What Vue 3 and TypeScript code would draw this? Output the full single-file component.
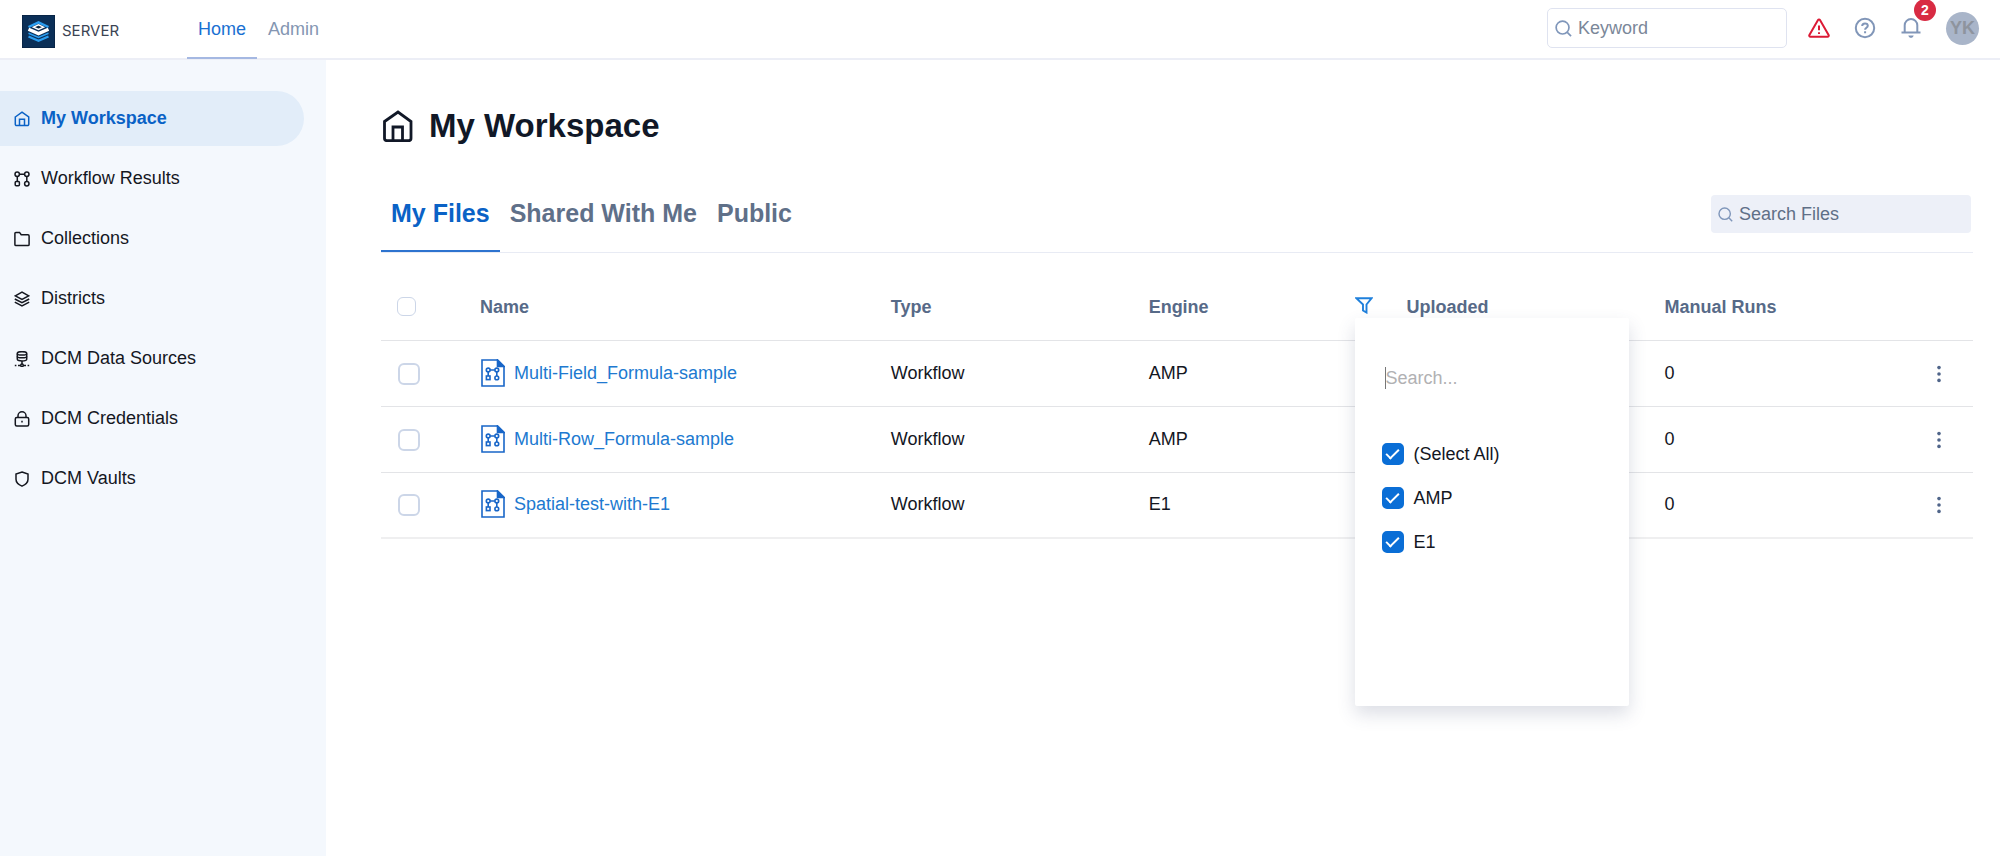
<script setup lang="ts">
import { ref } from 'vue'

interface NavItem {
  label: string
  icon: string
}

interface FileRow {
  name: string
  type: string
  engine: string
  uploaded: string
  runs: number
}

interface FilterOption {
  label: string
  checked: boolean
}

const topTabs = ['Home', 'Admin']
const fileTabs = ['My Files', 'Shared With Me', 'Public']

const navItems: NavItem[] = [
  { label: 'My Workspace', icon: 'home' },
  { label: 'Workflow Results', icon: 'flow' },
  { label: 'Collections', icon: 'folder' },
  { label: 'Districts', icon: 'layers' },
  { label: 'DCM Data Sources', icon: 'database' },
  { label: 'DCM Credentials', icon: 'lock' },
  { label: 'DCM Vaults', icon: 'shield' },
]

const activeTop = ref('Home')
const activeNav = ref('My Workspace')
const activeFileTab = ref('My Files')
const keyword = ref('')
const fileQuery = ref('')
const optionQuery = ref('')
const filterOpen = ref(true)
const allRows = ref(false)
const selected = ref<string[]>([])

const rows: FileRow[] = [
  { name: 'Multi-Field_Formula-sample', type: 'Workflow', engine: 'AMP', uploaded: '', runs: 0 },
  { name: 'Multi-Row_Formula-sample', type: 'Workflow', engine: 'AMP', uploaded: '', runs: 0 },
  { name: 'Spatial-test-with-E1', type: 'Workflow', engine: 'E1', uploaded: '', runs: 0 },
]

const options = ref<FilterOption[]>([
  { label: '(Select All)', checked: true },
  { label: 'AMP', checked: true },
  { label: 'E1', checked: true },
])
</script>

<template>
  <div class="app">
    <header class="topbar">
      <a class="brand" href="#">
        <svg class="brand-logo" viewBox="0 0 33 33" aria-hidden="true">
          <rect width="33" height="33" fill="#0b2f57" stroke="#071c38" />
          <g fill="none" stroke-linejoin="miter">
            <path d="M6.500 12 16.500 7.300 26.500 12" stroke="#2a9df0" stroke-width="2.400" />
            <path d="M11.500 12.200 16.500 9.800 21.500 12.200 16.500 14.500z" fill="#0a2540" stroke="#fff" stroke-width="1.400" />
            <path d="M6.500 14.300 16.500 18.600 26.500 14.300" stroke="#fff" stroke-width="3.400" />
            <path d="M6.500 18.300 16.500 22.500 26.500 18.300" stroke="#2a9df0" stroke-width="1.600" />
            <path d="M6.500 21.500 16.500 25.800 26.500 21.500" stroke="#2a9df0" stroke-width="2.200" />
          </g>
        </svg>
        <span class="brand-name">SERVER</span>
      </a>
      <nav class="top-tabs" aria-label="Main">
        <a
          v-for="tab in topTabs"
          :key="tab"
          href="#"
          class="top-tab"
          :class="{ active: tab === activeTop }"
          @click.prevent="activeTop = tab"
        >{{ tab }}</a>
      </nav>
      <div class="top-actions">
        <label class="keyword">
          <svg class="keyword-icon" viewBox="0 0 18 18" aria-hidden="true">
            <circle cx="8" cy="8" r="6.800" /><path d="M13 13l4 4" />
          </svg>
          <input v-model="keyword" type="text" placeholder="Keyword" aria-label="Keyword" />
        </label>
        <button class="icon-btn alert" type="button" aria-label="Alerts">
          <svg viewBox="0 0 22 22" aria-hidden="true">
            <path d="M10 3.100a1.200 1.200 0 0 1 2 0l8.600 14.900a1.200 1.200 0 0 1-1.100 1.800h-17a1.200 1.200 0 0 1-1.100-1.800z" />
            <path d="M11 8.500v4.800M11 15.200v1.800" />
          </svg>
        </button>
        <button class="icon-btn" type="button" aria-label="Help">
          <svg viewBox="0 0 22 22" aria-hidden="true">
            <circle cx="11" cy="11" r="9.200" />
            <path d="M8.200 9c0-1.700 1.200-2.600 2.800-2.600s2.800 1 2.800 2.400c0 1.900-2.700 2-2.700 3.900M11.100 14.200v2" />
          </svg>
        </button>
        <button class="icon-btn bell" type="button" aria-label="Notifications">
          <svg viewBox="0 0 22 22" aria-hidden="true">
            <path d="M1.500 15.500h19M4.700 15.500V8.300a6.300 6.300 0 0 1 12.600 0v7.200" />
            <path d="M8.300 18.500h5.400c-.5 1.600-1.400 2.300-2.700 2.300s-2.200-.7-2.700-2.300z" class="clapper" />
          </svg>
          <span class="badge">2</span>
        </button>
        <button class="avatar" type="button">YK</button>
      </div>
    </header>

    <div class="body">
      <aside class="sidebar">
        <nav class="side-nav" aria-label="Sections">
          <a
            v-for="item in navItems"
            :key="item.label"
            href="#"
            class="side-item"
            :class="{ active: item.label === activeNav }"
            @click.prevent="activeNav = item.label"
          >
            <svg class="side-icon" viewBox="0 0 16 16" aria-hidden="true">
              <g v-if="item.icon === 'home'">
                <path d="M1.300 6 8 1.200 14.700 6v7.300a1.300 1.300 0 0 1-1.300 1.300H2.600a1.300 1.300 0 0 1-1.300-1.300z" />
                <path d="M5.500 14.500V8.200h5v6.300" />
              </g>
              <g v-else-if="item.icon === 'flow'">
                <circle cx="3.200" cy="3.200" r="2.200" /><circle cx="12.800" cy="3.200" r="2.200" />
                <rect x="1.200" y="10.600" width="4.200" height="4.200" rx="1" /><circle cx="12.800" cy="12.700" r="2.200" />
                <path d="M5.400 3.200h5.200M3.300 5.400v5.200M12.800 5.400v5.200" />
              </g>
              <g v-else-if="item.icon === 'folder'">
                <path d="M.900 13.500V2.400a1 1 0 0 1 1-1h3.600L7.200 3.800h6.800a1.100 1.100 0 0 1 1.100 1.100v8.600a1.100 1.100 0 0 1-1.100 1.100H2a1.100 1.100 0 0 1-1.100-1.100z" />
              </g>
              <g v-else-if="item.icon === 'layers'">
                <path d="M1.300 4.800 8 1.200l6.700 3.600L8 8.400zM.800 8 8 11.700 15.200 8M.8 11.200 8 14.900l7.200-3.700" />
              </g>
              <g v-else-if="item.icon === 'database'">
                <path d="M3.300 2.500C3.300 0 12.700 0 12.700 2.500v5.700c0 2.300-9.400 2.300-9.400 0z" />
                <path d="M3.300 2.700c0 1.700 9.400 1.700 9.400 0M3.300 5.500c0 1.700 9.400 1.700 9.400 0M8 10v3M.8 14.500h1.600M4 14.500h2.500M9.500 14.500H12M13.600 14.500h1.600" />
                <circle cx="8" cy="14.300" r="1.300" />
              </g>
              <g v-else-if="item.icon === 'lock'">
                <rect x="1.300" y="6.500" width="13.400" height="8.400" rx="1.500" />
                <path d="M4 6.500V4.800a4 4 0 0 1 8 0v1.700M8 9.800v1.600" />
              </g>
              <g v-else>
                <path d="M8 1 14 3v5.200c0 3.400-2.400 5.400-6 6.900-3.600-1.500-6-3.500-6-6.900V3z" />
              </g>
            </svg>
            <span>{{ item.label }}</span>
          </a>
        </nav>
      </aside>

      <main class="content">
        <h1 class="title">
          <svg class="title-icon" viewBox="0 0 32 32" aria-hidden="true">
            <path d="M3.500 11.500 17 2l13 9.500v16.700a2.500 2.500 0 0 1-2.500 2.500H6a2.500 2.500 0 0 1-2.500-2.500z" />
            <path d="M12 30.500V17h9.500v13.500" />
          </svg>
          <span>My Workspace</span>
        </h1>

        <div class="tab-bar">
          <div class="file-tabs" role="tablist">
            <button
              v-for="tab in fileTabs"
              :key="tab"
              type="button"
              role="tab"
              class="file-tab"
              :class="{ active: tab === activeFileTab }"
              :aria-selected="tab === activeFileTab"
              @click="activeFileTab = tab"
            >{{ tab }}</button>
          </div>
          <label class="file-search">
            <svg class="file-search-icon" viewBox="0 0 18 18" aria-hidden="true">
              <circle cx="8" cy="8" r="6.800" /><path d="M13 13l4 4" />
            </svg>
            <input v-model="fileQuery" type="text" placeholder="Search Files" aria-label="Search Files" />
          </label>
        </div>

        <table class="files">
          <colgroup>
            <col class="col-check" />
            <col class="col-name" />
            <col class="col-mid" />
            <col class="col-mid" />
            <col class="col-mid" />
            <col class="col-mid" />
            <col />
          </colgroup>
          <thead>
            <tr>
              <th class="check-cell">
                <input v-model="allRows" type="checkbox" class="box box-small" aria-label="Select all files" />
              </th>
              <th>Name</th>
              <th>Type</th>
              <th>
                <div class="engine-head">
                  <span>Engine</span>
                  <div class="filter">
                    <button class="filter-btn" type="button" aria-label="Filter by engine" @click="filterOpen = !filterOpen">
                      <svg viewBox="0 0 18 18" aria-hidden="true">
                        <path d="M1.300 2.200h15.400l-5.200 6.300V16.500L8 14.500v-6z" />
                      </svg>
                    </button>
                    <div v-if="filterOpen" class="filter-panel">
                      <input v-model="optionQuery" class="filter-search" type="text" placeholder="Search..." aria-label="Search engines" />
                      <label v-for="option in options" :key="option.label" class="filter-option">
                        <input v-model="option.checked" type="checkbox" class="box" />
                        <span>{{ option.label }}</span>
                      </label>
                    </div>
                  </div>
                </div>
              </th>
              <th>Uploaded</th>
              <th>Manual Runs</th>
              <th></th>
            </tr>
          </thead>
          <tbody>
            <tr v-for="row in rows" :key="row.name">
              <td class="check-cell">
                <input v-model="selected" type="checkbox" class="box" :value="row.name" :aria-label="`Select ${row.name}`" />
              </td>
              <td>
                <a href="#" class="file-link">
                  <svg class="doc-icon" viewBox="0 0 24 28" aria-hidden="true">
                    <path d="M1 1h15.500l6.500 6.500V27H1z" />
                    <path d="M16.500 1v6.500H23z" class="fold" />
                    <g class="nodes">
                      <circle cx="7.200" cy="11" r="1.900" /><circle cx="15.800" cy="11" r="1.900" />
                      <rect x="5.400" y="17" width="3.600" height="3.600" /><circle cx="15.800" cy="18.900" r="1.900" />
                      <path d="M9.200 11h4.600M7.200 13v4M15.800 13v4" />
                    </g>
                  </svg>
                  <span>{{ row.name }}</span>
                </a>
              </td>
              <td>{{ row.type }}</td>
              <td>{{ row.engine }}</td>
              <td>{{ row.uploaded }}</td>
              <td>{{ row.runs }}</td>
              <td class="menu-cell">
                <button class="kebab" type="button" :aria-label="`Actions for ${row.name}`">
                  <svg viewBox="0 0 18 18" aria-hidden="true">
                    <circle cx="9" cy="2.600" r="1.800" /><circle cx="9" cy="9" r="1.800" /><circle cx="9" cy="15.400" r="1.800" />
                  </svg>
                </button>
              </td>
            </tr>
          </tbody>
        </table>
      </main>
    </div>
  </div>
</template>

<style>
body {
  margin: 0;
  background: #fff;
}
</style>

<style scoped>
.app {
  display: flex;
  flex-direction: column;
  min-height: 100vh;
  font-family: Arial, "Liberation Sans", sans-serif;
  font-size: 18px;
  line-height: 22px;
  color: #14171f;
}

.app *,
.app *::before {
  box-sizing: border-box;
}

a {
  color: inherit;
  text-decoration: none;
}

button,
input {
  font: inherit;
  color: inherit;
}

button {
  padding: 0;
  border: 0;
  background: none;
  cursor: pointer;
}

svg {
  display: block;
  flex: none;
  fill: none;
  stroke: currentColor;
}

.topbar {
  display: flex;
  align-items: stretch;
  height: 60px;
  border-bottom: 2px solid #eceef6;
}

.brand {
  display: flex;
  align-items: center;
  gap: 7px;
  width: 187px;
  padding: 4px 0 0 22px;
}

.brand-logo {
  width: 33px;
  height: 33px;
}

.brand-name {
  font-family: Inter, "Open Sans", sans-serif;
  font-size: 15px;
  color: #3c4453;
}

.top-tabs {
  display: flex;
  margin-bottom: -1px;
}

.top-tab {
  padding: 18px 11px 0;
  border-bottom: 2px solid transparent;
  color: #8496b2;
}

.top-tab.active {
  color: #1a70d2;
  border-color: #a5b8e2;
}

.top-actions {
  display: flex;
  align-items: center;
  margin-left: auto;
  padding: 0 21px 2px 0;
}

.keyword {
  display: flex;
  align-items: center;
  gap: 6px;
  width: 240px;
  height: 40px;
  margin-right: 21px;
  padding: 0 8px 0 7px;
  border: 1px solid #dfe3f0;
  border-radius: 5px;
}

.keyword-icon {
  width: 17px;
  height: 17px;
  color: #7f96ba;
  stroke-width: 1.8;
}

.keyword input,
.file-search input {
  flex: 1;
  min-width: 0;
  padding: 0;
  border: 0;
  outline: 0;
  background: none;
}

.keyword input::placeholder {
  color: #7b8799;
  opacity: 1;
}

.icon-btn {
  position: relative;
  width: 22px;
  height: 22px;
  margin-right: 24px;
  color: #8196b8;
}

.icon-btn svg {
  width: 22px;
  height: 22px;
  stroke-width: 2;
}

.icon-btn.alert {
  color: #dc1a35;
}

.bell .clapper {
  fill: currentColor;
  stroke: none;
}

.badge {
  position: absolute;
  top: -18px;
  left: 14px;
  width: 22px;
  height: 22px;
  border-radius: 50%;
  background: #d82b43;
  color: #fff;
  font-size: 14px;
  font-weight: 700;
  text-align: center;
}

.avatar {
  width: 33px;
  height: 33px;
  border-radius: 50%;
  background: #a9b5c9;
  color: #8e949e;
  font-weight: 700;
}

.body {
  display: flex;
  flex: 1;
}

.sidebar {
  flex: none;
  width: 326px;
  padding: 31px 22px 31px 0;
  background: #f4f8fd;
}

.side-nav {
  display: flex;
  flex-direction: column;
  gap: 5px;
}

.side-item {
  display: flex;
  align-items: center;
  gap: 11px;
  height: 55px;
  padding: 0 0 2px 14px;
  border-radius: 0 28px 28px 0;
}

.side-item.active {
  background: #e2edf9;
  color: #0a62c6;
  font-weight: 700;
}

.side-icon {
  width: 16px;
  height: 16px;
  margin-top: 3px;
  stroke-width: 1.5;
}

.content {
  flex: 1;
  min-width: 0;
  padding: 44px 27px 32px 55px;
}

.title {
  display: flex;
  align-items: center;
  gap: 16px;
  margin: 0;
  font-size: 33px;
  line-height: 44px;
  color: #111827;
}

.title-icon {
  width: 32px;
  height: 32px;
  stroke-width: 2.8;
}

.tab-bar {
  display: flex;
  align-items: flex-end;
  justify-content: space-between;
  height: 105px;
  border-bottom: 1px solid #e8ebf4;
}

.file-tabs {
  display: flex;
}

.file-tab {
  height: 56px;
  padding: 0 10px 21px;
  border-bottom: 2px solid transparent;
  font-size: 25px;
  line-height: 32px;
  font-weight: 700;
  color: #5f7089;
}

.file-tab.active {
  color: #0a62c6;
  border-color: #2d73cf;
}

.file-search {
  display: flex;
  align-items: center;
  gap: 6px;
  width: 260px;
  height: 38px;
  margin: 0 2px 19px 0;
  padding: 0 7px;
  border-radius: 4px;
  background: #edf0f8;
}

.file-search-icon {
  width: 15px;
  height: 15px;
  color: #7f96ba;
  stroke-width: 1.7;
}

.file-search input::placeholder {
  color: #5f6f87;
  opacity: 1;
}

.files {
  width: 100%;
  table-layout: fixed;
  border-collapse: separate;
  border-spacing: 0;
}

.col-check {
  width: 99px;
}

.col-name {
  width: 25.8%;
}

.col-mid {
  width: 16.2%;
}

th,
td {
  padding: 0;
  border-bottom: 1px solid #e3e4e7;
  text-align: left;
}

th {
  height: 88px;
  padding-top: 20px;
  font-weight: 700;
  color: #576a88;
}

td {
  height: 66px;
  padding-bottom: 2px;
}

tbody tr:last-child td {
  border-bottom: 2px solid #efeff0;
}

.check-cell {
  padding-bottom: 0;
  padding-left: 17px;
}

th.check-cell {
  padding-left: 16px;
}

.box {
  display: block;
  flex: none;
  appearance: none;
  width: 22px;
  height: 22px;
  margin: 0;
  border: 2px solid #ccd6e8;
  border-radius: 6px;
  background: #fff;
}

.box-small {
  width: 19px;
  height: 19px;
  border-width: 1px;
}

.box:checked {
  display: grid;
  place-items: center;
  border-color: #0a6ed6;
  border-radius: 5px;
  background: #0a6ed6;
}

.box:checked::before {
  content: "";
  width: 13px;
  height: 7px;
  margin-bottom: 3px;
  border: solid #fff;
  border-width: 0 0 2px 2px;
  rotate: -45deg;
}

.engine-head {
  display: flex;
  align-items: center;
  justify-content: space-between;
  padding-right: 34px;
}

.filter {
  position: relative;
}

.filter-btn {
  display: flex;
  align-items: flex-start;
  width: 18px;
  height: 22px;
  color: #1f80dc;
}

.filter-btn svg {
  width: 18px;
  height: 18px;
  stroke-width: 1.9;
}

.filter-panel {
  position: absolute;
  z-index: 5;
  top: 22px;
  left: 0;
  display: flex;
  flex-direction: column;
  gap: 22px;
  width: 274px;
  height: 388px;
  padding: 49px 27px 0;
  border-radius: 2px;
  background: #fff;
  box-shadow: 0 8px 18px rgba(60, 70, 110, 0.18);
  font-weight: 400;
  color: #14171f;
}

.filter-search {
  width: 100%;
  height: 22px;
  margin: 0 0 32px 3px;
  padding: 0;
  border: 0;
  border-left: 1px solid #777;
  outline: 0;
  background: none;
}

.filter-search::placeholder {
  color: #b1b1b3;
  opacity: 1;
}

.filter-option {
  display: flex;
  align-items: center;
  gap: 10px;
  height: 22px;
}

.file-link {
  display: flex;
  align-items: center;
  gap: 9px;
  padding-left: 1px;
  color: #2079d0;
}

.doc-icon {
  width: 24px;
  height: 28px;
  color: #1866c8;
  stroke-width: 1.6;
}

.doc-icon .fold {
  fill: currentColor;
}

.menu-cell {
  padding-right: 25px;
  padding-bottom: 0;
}

.kebab {
  display: block;
  margin-left: auto;
  color: #50658a;
}

.kebab svg {
  width: 18px;
  height: 18px;
  fill: currentColor;
  stroke: none;
}
</style>
